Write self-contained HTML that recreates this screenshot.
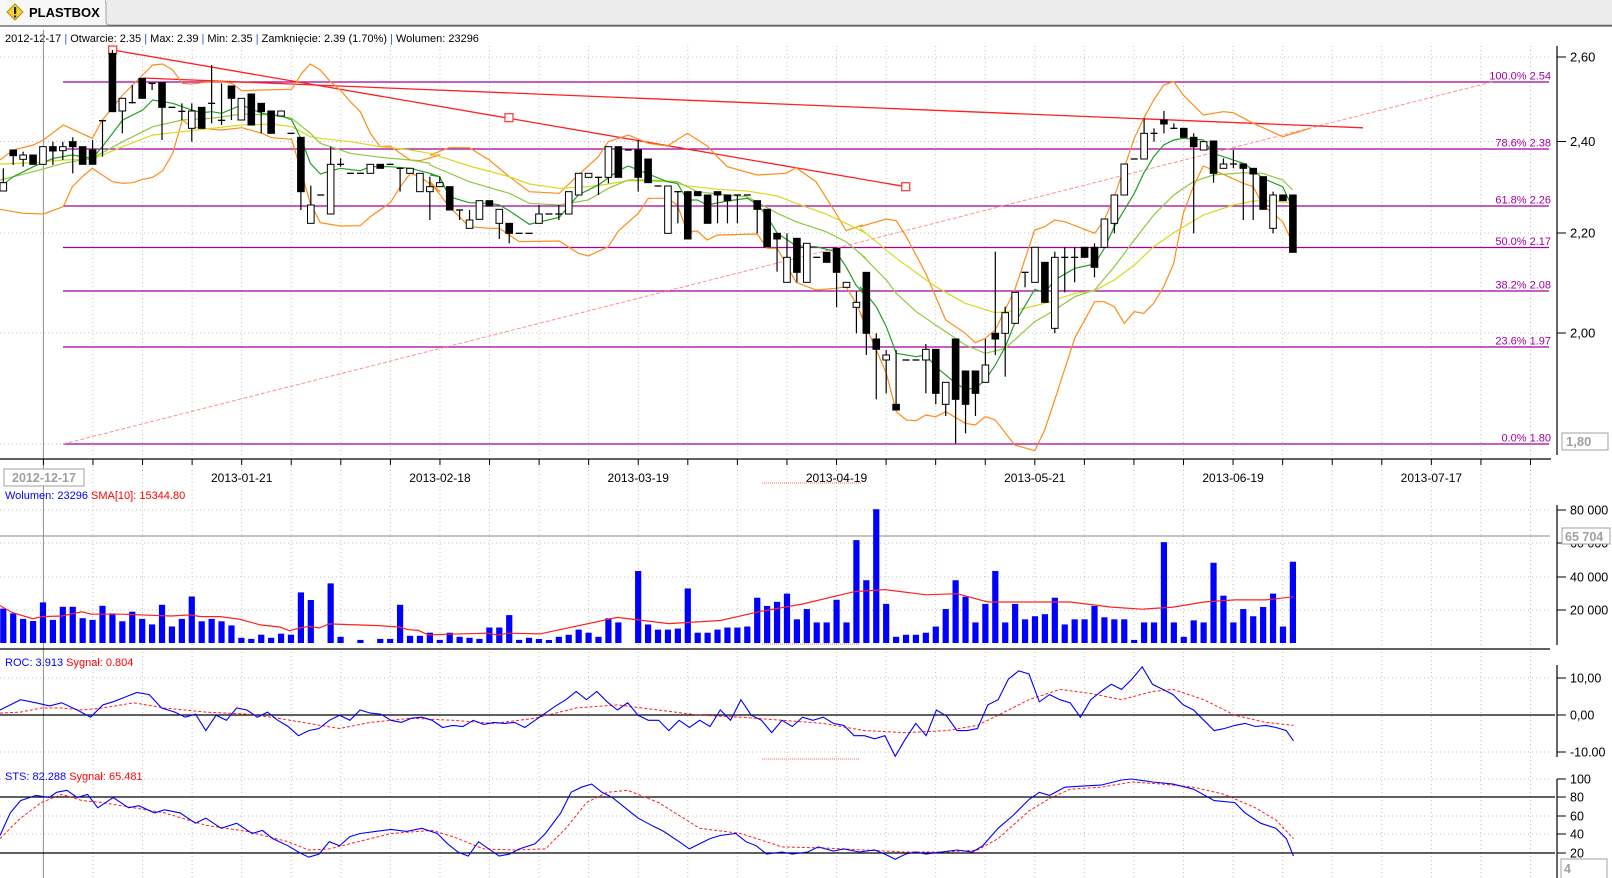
<!DOCTYPE html>
<html><head><meta charset="utf-8"><style>
html,body{margin:0;padding:0;background:#fff;width:1612px;height:878px;overflow:hidden}
svg{display:block;font-family:"Liberation Sans",sans-serif}
</style></head><body>
<svg id="s" width="1612" height="878" xmlns="http://www.w3.org/2000/svg">
<rect x="0" y="0" width="1612" height="26" fill="#ececec"/>
<path d="M0 26 L0 0 L103 0 Q106 0 106 4 L106 22 Q106 25 110 25 L1612 25" fill="#f7f7f7" stroke="#a0a0a0"/>
<rect x="0" y="0" width="105" height="26" fill="#f7f7f7"/>
<line x1="0" y1="26" x2="1612" y2="26" stroke="#303030"/>
<path d="M15 4 L23 12 L15 20 L7 12 Z" fill="#f3d23a" stroke="#b08a10"/>
<rect x="14" y="7" width="2.2" height="7" fill="#222"/><rect x="14" y="15.5" width="2.2" height="2" fill="#222"/>
<text x="29" y="17" font-size="13" font-weight="bold" fill="#000">PLASTBOX</text>
<text x="5" y="42" font-size="11" fill="#000">2012-12-17 <tspan fill="#2060c0">|</tspan> Otwarcie: 2.35 <tspan fill="#2060c0">|</tspan> Max: 2.39 <tspan fill="#2060c0">|</tspan> Min: 2.35 <tspan fill="#2060c0">|</tspan> Zamknięcie: 2.39 (1.70%)  <tspan fill="#2060c0">|</tspan> Wolumen: 23296</text>
<g id="g"></g>
</svg>
<script>
var g=document.getElementById('g'),h='';
function L(x1,y1,x2,y2,c,w,d){h+='<line x1="'+x1+'" y1="'+y1+'" x2="'+x2+'" y2="'+y2+'" stroke="'+c+'" stroke-width="'+(w||1)+'"'+(d?' stroke-dasharray="'+d+'"':'')+'/>';}
function T(x,y,t,c,sz,a,extra){h+='<text x="'+x+'" y="'+y+'" fill="'+c+'" font-size="'+sz+'"'+(a?' text-anchor="'+a+'"':'')+(extra||'')+'>'+t+'</text>';}
function P(pts,c,w,d){h+='<polyline fill="none" stroke="'+c+'" stroke-width="'+(w||1)+'"'+(d?' stroke-dasharray="'+d+'"':'')+' points="'+pts.map(function(p){return p[0].toFixed(1)+','+p[1].toFixed(1)}).join(' ')+'"/>';}
var gx=[];for(var k=0;k<=30;k++)gx.push(43.4+49.57*k);
// grid verticals
function vgrid(y1,y2){gx.forEach(function(x,k){if(k>0&&x<1552)L(x,y1,x,y2,'#c0c0c0',1,'1,3');});}
vgrid(46,458);vgrid(466,536);vgrid(536,645);vgrid(652,770);vgrid(772,878);
// price grid
[57,141.5,233,333,444].forEach(function(y){L(0,y,1550,y,'#c0c0c0',1,'1,3');});
// cursor line
L(43.4,30,43.4,878,'#909090',1);
// fib
var fib=[[82,'100.0% 2.54'],[149,'78.6% 2.38'],[206,'61.8% 2.26'],[247.5,'50.0% 2.17'],[291,'38.2% 2.08'],[347,'23.6% 1.97'],[444,'0.0% 1.80']];
fib.forEach(function(f){L(63,f[0],1549,f[0],'#a000a0',1.2);T(1551,f[0]-2.5,f[1],'#a000a0',11,'end');});
// pink dashed
L(63,444,1492,82,'#ff9090',1,'4,2');
// red lines
L(112.7,50,905.7,186.7,'#ff2020',1.3);L(143,78,1363,127.8,'#ff2020',1.3);
[[112.7,50],[509,117.7],[905.7,186.7]].forEach(function(p){h+='<rect x="'+(p[0]-4)+'" y="'+(p[1]-4)+'" width="8" height="8" fill="#fff" stroke="#ff4040" stroke-width="1.3"/>';});
// indicator lines
function cv(arr,off){return arr.map(function(p){return [off+p[0]/3,40+p[1]/3];});}
function seg(a6,a7,a8){return cv(a6,0).concat(cv(a7,430)).concat(cv(a8,860));}
var up=seg([[0,360],[40,330],[100,315],[130,300],[190,255],[277,295],[307,240],[368,165],[428,105],[458,75],[488,72],[518,90],[547,130],[575,132],[605,128],[635,125],[665,125],[695,130],[725,152],[785,150],[875,148],[905,100],[931,72],[961,90],[991,125],[1021,150],[1051,185],[1081,215],[1111,280],[1141,320],[1171,318],[1201,340],[1231,360],[1261,362],[1319,345]],
[[0,345],[58,323],[118,323],[178,360],[238,410],[298,455],[388,460],[445,405],[505,350],[535,305],[595,285],[655,310],[712,318],[772,280],[832,318],[862,350],[892,380],[982,405],[1068,400],[1098,383],[1158,425],[1218,520],[1248,572],[1298,555]],
[[0,560],[79,537],[109,542],[139,590],[197,700],[257,840],[316,880],[346,908],[376,895],[406,870],[464,750],[524,570],[554,560],[584,540],[614,545],[704,580],[733,540],[763,470],[823,295],[851,235],[881,180],[911,135],[941,125],[970,165],[1030,225],[1090,215],[1120,218],[1180,250],[1268,290],[1350,265]]);
var lo=seg([[0,508],[70,520],[130,522],[190,500],[217,440],[247,410],[277,385],[307,405],[338,425],[368,430],[398,428],[428,418],[458,412],[488,392],[518,340],[547,240],[575,260],[605,265],[665,270],[725,263],[785,280],[815,293],[875,298],[905,400],[931,490],[961,548],[1021,558],[1081,557],[1111,530],[1171,488],[1201,440],[1231,400],[1261,410],[1319,455]],
[[0,425],[58,500],[118,560],[178,565],[208,565],[268,605],[388,603],[445,640],[475,648],[535,620],[565,573],[625,520],[655,475],[712,475],[742,495],[772,575],[802,573],[832,600],[862,585],[982,582],[1012,625],[1042,625],[1098,727],[1158,750],[1218,745],[1248,740],[1278,790],[1308,855]],
[[0,820],[49,930],[79,1000],[109,1115],[139,1140],[169,1142],[197,1125],[227,1130],[257,1115],[316,1150],[346,1155],[376,1130],[406,1140],[464,1215],[524,1232],[554,1170],[584,1080],[644,895],[704,785],[733,785],[763,800],[793,850],[823,815],[851,820],[881,790],[911,740],[941,670],[970,520],[1000,440],[1030,378],[1090,403],[1150,430],[1180,440],[1208,495],[1238,520],[1268,545],[1298,610]]);
var yl=seg([[0,372],[100,368],[190,360],[277,358],[368,320],[458,285],[547,275],[635,265],[725,255],[815,252],[875,260],[931,290],[961,295],[1051,305],[1141,320],[1231,330],[1289,340]],
[[0,340],[118,378],[238,410],[298,432],[388,445],[475,440],[535,432],[595,422],[712,425],[772,437],[862,448],[952,453],[1042,468],[1098,490],[1188,522],[1248,550],[1308,580]],
[[0,565],[109,655],[227,740],[316,790],[406,818],[464,812],[554,790],[644,760],[704,752],[763,720],[823,675],[881,620],[941,578],[1030,525],[1120,495],[1180,483],[1238,482],[1298,490]]);
var lg=seg([[0,420],[100,395],[190,370],[277,355],[368,305],[458,260],[547,240],[635,235],[725,222],[815,225],[875,235],[931,280],[961,310],[1051,340],[1141,352],[1231,360],[1289,370]],
[[0,375],[118,425],[238,460],[298,490],[388,495],[475,480],[535,445],[595,420],[655,420],[742,425],[802,455],[892,465],[952,470],[1042,520],[1098,545],[1188,575],[1248,605],[1308,655]],
[[0,640],[79,720],[109,760],[169,815],[227,855],[316,915],[376,940],[436,925],[524,845],[584,810],[644,770],[704,750],[763,680],[823,600],[881,525],[941,465],[1000,425],[1060,405],[1150,398],[1208,400],[1268,420],[1298,450]]);
var gr=seg([[0,440],[40,410],[100,380],[160,355],[217,345],[277,355],[307,320],[368,240],[428,210],[458,180],[518,190],[575,210],[605,218],[635,215],[665,220],[725,195],[785,220],[845,228],[875,240],[905,300],[931,370],[961,402],[1021,385],[1081,392],[1111,380],[1171,380],[1231,385],[1289,400],[1319,410]],
[[0,405],[29,410],[58,470],[118,488],[178,490],[208,495],[238,512],[298,553],[388,532],[445,465],[505,435],[565,392],[595,378],[655,402],[712,425],[742,430],[772,480],[802,480],[832,495],[892,483],[952,475],[982,492],[1012,530],[1042,580],[1098,617],[1158,620],[1218,635],[1248,680],[1278,735],[1308,770]],
[[0,740],[49,800],[79,860],[109,940],[169,950],[197,945],[227,980],[287,1030],[316,1047],[346,1045],[376,1020],[406,975],[436,920],[464,850],[524,748],[554,758],[584,720],[644,685],[704,672],[733,625],[763,560],[823,460],[851,400],[881,350],[911,315],[941,300],[970,295],[1030,300],[1060,340],[1150,370],[1180,390],[1208,415],[1268,440],[1298,505]]);
P(up,'#ff8c1a',1.2);P(lo,'#ff8c1a',1.2);P(yl,'#d8d820',1.2);P(lg,'#90c840',1.2);P(gr,'#20a020',1.2);
// candles [i,top,bot,hi,lo,type] zoom units
var C=[[0,428,453,385,453,'w'],[1,330,347,330,375,'b'],[2,345,358,335,380,'w'],[3,345,373,345,373,'b'],[4,320,373,320,373,'w'],[5,320,333,305,375,'b'],[6,320,332,305,360,'w'],[7,305,320,292,400,'b'],[8,320,373,320,373,'b'],[9,330,373,300,373,'b'],[10,242,242,240,350,'c'],[11,40,215,30,215,'b'],[12,175,213,175,280,'w'],[13,188,188,135,190,'c'],[14,115,175,115,175,'b'],[15,130,130,130,150,'c'],[16,128,202,128,300,'b'],[17,202,202,202,202,'c'],[18,214,214,190,240,'c'],[19,213,265,190,305,'w'],[20,202,265,202,265,'b'],[21,190,190,75,250,'c'],[22,241,241,130,255,'c'],[23,138,175,138,240,'b'],[24,175,240,175,240,'w'],[25,162,255,162,255,'b'],[26,190,215,190,280,'b'],[27,213,280,213,280,'b'],[28,213,228,213,228,'w'],[29,280,280,280,280,'c'],[30,292,455,292,510,'b'],[31,495,550,437,550,'w'],[32,465,465,465,465,'c'],[33,373,522,320,522,'w'],[34,373,373,355,380,'c'],[35,400,400,400,400,'c'],[36,400,400,400,400,'c'],[37,373,400,373,400,'w'],[38,373,385,373,385,'b'],[39,373,373,373,373,'c'],[40,385,385,385,455,'c'],[41,385,400,385,400,'w'],[42,400,455,400,455,'w'],[43,440,455,410,540,'w'],[44,428,440,410,440,'w'],[45,440,510,440,510,'b'],[46,510,510,510,540,'c'],[47,540,565,510,565,'w'],[48,482,538,482,538,'w'],[49,482,498,482,498,'b'],[50,508,550,508,597,'w'],[51,550,580,550,610,'b'],[52,580,580,580,580,'c'],[53,580,580,580,580,'c'],[54,522,550,495,550,'w'],[55,522,522,522,522,'c'],[56,522,522,495,540,'c'],[57,455,522,455,522,'w'],[58,400,465,400,465,'w'],[59,400,412,400,412,'w'],[60,412,412,412,465,'c'],[61,320,412,320,430,'w'],[62,320,412,320,412,'b'],[63,330,330,330,330,'c'],[64,330,412,300,455,'b'],[65,357,428,357,428,'b'],[66,438,438,438,438,'c'],[67,438,580,438,580,'w'],[68,455,455,455,550,'c'],[69,455,597,455,597,'b'],[70,455,467,455,467,'b'],[71,465,550,465,550,'b'],[72,455,465,455,550,'b'],[73,465,482,465,550,'b'],[74,465,465,465,550,'c'],[75,465,465,465,465,'c'],[76,482,508,482,580,'b'],[77,508,620,508,620,'b'],[78,580,597,580,695,'b'],[79,652,727,580,727,'w'],[80,595,697,595,727,'b'],[81,610,727,610,727,'w'],[82,652,652,652,652,'c'],[83,637,667,637,667,'b'],[84,625,697,625,802,'b'],[85,727,742,727,742,'w'],[86,787,802,755,880,'w'],[87,697,880,697,945,'b'],[88,897,928,880,1078,'b'],[89,945,960,930,1060,'w'],[90,1093,1110,930,1110,'b'],[91,960,960,960,960,'c'],[92,960,960,960,960,'c'],[93,928,960,912,1060,'w'],[94,928,1060,928,1093,'b'],[95,1027,1093,1027,1128,'w'],[96,897,1078,897,1210,'b'],[97,993,1093,993,1180,'b'],[98,993,1060,993,1128,'b'],[99,975,1027,897,1027,'w'],[100,880,897,635,945,'b'],[101,818,880,800,1010,'w'],[102,757,850,757,850,'w'],[103,697,697,697,742,'c'],[104,622,727,622,727,'w'],[105,667,787,667,787,'b'],[106,652,865,635,880,'w'],[107,652,652,622,757,'c'],[108,652,652,622,727,'c'],[109,622,652,622,652,'b'],[110,622,682,610,712,'b'],[111,537,622,537,622,'w'],[112,465,550,465,580,'w'],[113,372,465,372,465,'w'],[114,357,357,357,357,'c'],[115,280,357,235,357,'w'],[116,280,280,265,305,'c'],[117,240,252,213,280,'b'],[118,265,265,250,265,'c'],[119,265,292,265,292,'b'],[120,292,320,280,580,'b'],[121,305,330,305,330,'w'],[122,303,400,303,428,'b'],[123,372,385,355,385,'w'],[124,372,372,330,385,'c'],[125,372,385,372,540,'b'],[126,385,402,385,540,'b'],[127,410,508,410,508,'b'],[128,465,565,455,580,'w'],[129,465,482,465,482,'b'],[130,465,637,465,637,'b']];
C.forEach(function(c){var x=3.3+9.92*c[0],t=40+c[1]/3,b=40+c[2]/3,hi=40+c[3]/3,lw=40+c[4]/3;
 if(hi<t)L(x,hi,x,t,'#000',1.2);if(lw>b)L(x,b,x,lw,'#000',1.2);
 if(c[5]=='c'){L(x-3.5,t,x+3.5,t,'#000',1.3);}
 else{var hh=Math.max(b-t,2);h+='<rect x="'+(x-3.3)+'" y="'+t+'" width="6.6" height="'+hh+'" fill="'+(c[5]=='b'?'#000':'#fff')+'" stroke="#000" stroke-width="1"/>';}});
// price axis
L(1557,46,1557,455,'#000',1.2);
[[57,'2,60'],[141.5,'2,40'],[233,'2,20'],[333,'2,00']].forEach(function(a){L(1557,a[0],1566,a[0],'#000');T(1570,a[0]+4.5,a[1],'#000',13);});
h+='<rect x="1562" y="433" width="46" height="17" fill="#fff" stroke="#a0a0a0"/>';T(1566,446,'1,80','#a0a0a0',13,null,' font-weight="bold"');
// x axis
L(0,459,1551,459,'#000',1.2);
gx.forEach(function(x){if(x<1552)L(x,459,x,465,'#000');});
['2012-12-17','2013-01-21','2013-02-18','2013-03-19','2013-04-19','2013-05-21','2013-06-19','2013-07-17'].forEach(function(d,i){if(i>0)T(gx[i*4],482,d,'#000',12,'middle');});
h+='<rect x="4" y="469" width="80" height="17" fill="#fff" stroke="#a0a0a0"/>';T(44,482,'2012-12-17','#a0a0a0',12.5,'middle',' font-weight="bold"');
L(762,483,861,483,'#ff6060',1,'1,1');
// volume panel
h+='<text x="5" y="499" font-size="11"><tspan fill="#0000ff">Wolumen: 23296 </tspan><tspan fill="#ff0000">SMA[10]: 15344.80</tspan></text>';
[510,543,577,610].forEach(function(y){L(0,y,1550,y,'#c0c0c0',1,'1,3');});
L(0,536,1550,536,'#a0a0a0',1.2);
var V=[34.4,29.6,24.1,22,40.6,23.1,36.2,36.2,24.8,23.1,37.2,29.6,21.7,31.3,24.1,18.6,38.2,16.5,24.1,46.5,21.7,24.1,21.7,17.6,5.2,4.1,8.3,5.2,9.3,8.3,50.6,43,0,59.6,6.2,0,3.1,0,4.1,4.1,38.2,7.2,7.2,10.3,3.1,10.3,6.2,5.2,4.1,15.5,15.5,27.9,3.1,5.2,4,3];
var vt=[612,610,605,608,612,594,598,0,548,600,605,605,604,565,608,608,605,603,603,602,574,582,578,570,595,585,598,598,576,598,518,557,488,580,612,610,610,608,602,585,557,573,598,580,548,598,580,595,592,590,574,600,595,595,582,593,595,595,615,598,598,520,598,612,596,598,540,572,598,585,592,583,570,602,539];
vt.forEach(function(t){V.push(t?(618-t)*1.029:0);});
V.forEach(function(v,i){if(v>0){var x=3.3+9.92*i;h+='<rect x="'+(x-3.1)+'" y="'+(643-v)+'" width="6.2" height="'+v+'" fill="#0000ff"/>';}});
var sma=[[0,510],[35,530],[95,548],[123,542],[180,540],[237,528],[265,535],[352,535],[439,538],[497,540],[553,537],[582,542],[640,542],[698,550],[756,566],[812,572],[841,583],[870,575],[898,570],[927,575],[956,563],[1014,565],[1101,568],[1157,572],[1186,580],[1215,582],[1244,595],[1302,593],[1417,590],[1446,596],[1475,590],[1568,592]].map(function(p){return [p[0]/2.904,430+p[1]/2.904];});
[[600,600],[650,606],[700,603],[740,594],[780,587],[830,575],[860,573],[900,578],[930,577],[960,585],[1000,585],[1040,585],[1080,590],[1110,592],[1140,590],[1170,585],[1200,583],[1230,583],[1257,580]].forEach(function(p){sma.push([p[0]*1.029,p[1]*1.029]);});
P(sma,'#ff2020',1.2);
L(0,649,1550,649,'#000',1.2);
L(1557,505,1557,645,'#000',1.2);
[[510,'80 000'],[543,'60 000'],[577,'40 000'],[610,'20 000']].forEach(function(a){L(1557,a[0],1566,a[0],'#000');T(1570,a[0]+4.5,a[1],'#000',12.5);});
h+='<rect x="1562" y="528" width="48" height="16" fill="#fff" stroke="#a0a0a0"/>';T(1565,541,'65 704','#a0a0a0',12.5,null,' font-weight="bold"');
L(762,644,860,644,'#ff6060',1,'1,1');
// ROC
h+='<text x="5" y="666" font-size="11"><tspan fill="#0000ff">ROC: 3.913 </tspan><tspan fill="#ff0000">Sygnał: 0.804</tspan></text>';
[678,752].forEach(function(y){L(0,y,1550,y,'#c0c0c0',1,'1,3');});
L(0,715,1555,715,'#000',1.2);
L(1557,665,1557,757,'#000',1.2);
[[678,'10,00'],[715,'0,00'],[752,'-10.00']].forEach(function(a){L(1557,a[0],1566,a[0],'#000');T(1570,a[0]+4.5,a[1],'#000',12.5);});
function sc(a){return a.map(function(p){return [p[0]*1.029,p[1]*1.029];});}
var roc=[[0,690],[10,685],[20,680],[35,683],[48,686],[60,683],[75,690],[88,697],[100,685],[110,682],[120,678],[133,673],[145,675],[157,688],[170,692],[180,697],[190,694],[200,710],[210,695],[220,700],[230,688],[240,690],[250,697],[260,692],[270,700],[280,706],[290,715],[300,710],[310,708],[320,700],[330,695],[340,700],[350,690],[360,693],[370,694],[380,700],[390,702],[400,698],[410,697],[420,700],[430,707],[440,705],[450,706],[460,700],[470,704],[480,702],[490,703],[500,702],[510,707],[520,700],[530,693],[540,686],[550,680],[560,672],[570,680],[580,672],[590,682],[600,690],[610,683],[620,695],[630,700],[640,700],[650,710],[660,700],[670,707],[680,700],[690,706],[700,690],[710,700],[720,680],[730,695],[740,700],[750,712],[760,700],[770,706],[780,697],[790,700],[800,697],[810,703],[820,705],[830,715],[840,715],[850,718],[860,715],[870,735],[880,718],[890,703],[900,715],[910,690],[920,696],[930,710],[940,710],[950,708],[960,685],[970,680],[980,660],[990,652],[1000,655],[1010,682],[1020,675],[1030,680],[1040,683],[1050,697],[1060,680],[1070,672],[1080,665],[1090,670],[1100,660],[1110,648],[1120,665],[1130,670],[1140,675],[1150,685],[1160,690],[1170,700],[1180,710],[1190,708],[1200,705],[1210,703],[1220,706],[1230,705],[1240,707],[1250,710],[1257,720]];
var rocs=[[0,693],[20,692],[40,688],[60,688],[80,690],[100,688],[130,683],[160,688],[200,692],[240,694],[270,698],[300,703],[330,708],[360,702],[400,698],[440,700],[480,703],[520,698],[560,688],[600,685],[640,690],[680,695],[720,697],[760,700],[800,703],[840,710],[880,712],[920,710],[950,705],[970,695],[1000,680],[1030,670],[1060,674],[1090,680],[1120,672],[1140,670],[1170,680],[1200,695],[1230,702],[1257,705]];
P(sc(rocs),'#ff2020',1,'3,2');P(sc(roc),'#0000ff',1.1);
L(762,759,860,759,'#ff6060',1,'1,1');
// STS
h+='<text x="5" y="780" font-size="11"><tspan fill="#0000ff">STS: 82.288 </tspan><tspan fill="#ff0000">Sygnał: 65.481</tspan></text>';
[779,816,834].forEach(function(y){L(0,y,1550,y,'#c0c0c0',1,'1,3');});
L(0,797,1555,797,'#000',1.2);L(0,853,1555,853,'#000',1.2);
L(1557,779,1557,878,'#000',1.2);
[[779,'100'],[797,'80'],[816,'60'],[834,'40'],[853,'20']].forEach(function(a){L(1557,a[0],1566,a[0],'#000');T(1570,a[0]+4.5,a[1],'#000',12.5);});
h+='<rect x="1561" y="859" width="46" height="20" fill="#fff" stroke="#a0a0a0"/>';T(1564,873,'4','#a0a0a0',12.5,null,' font-weight="bold"');
var sts=[[0,812],[10,790],[20,778],[35,773],[48,775],[55,770],[65,768],[75,775],[85,772],[95,785],[110,775],[125,785],[135,783],[150,790],[160,787],[175,790],[190,800],[200,795],[215,805],[230,800],[245,810],[255,807],[265,815],[280,822],[290,828],[300,833],[310,830],[320,818],[330,822],[340,813],[350,810],[365,808],[380,806],[395,808],[410,805],[425,810],[435,820],[445,828],[455,832],[465,818],[475,825],[485,832],[495,830],[505,825],[520,820],[530,810],[545,790],[555,770],[565,765],[575,762],[585,770],[595,775],[605,783],[620,795],[635,803],[645,808],[660,818],[670,825],[680,820],[690,815],[700,812],[715,810],[725,818],[735,822],[745,830],[760,828],[770,830],[785,828],[795,823],[810,827],[820,825],[835,828],[850,826],[860,830],[870,835],[880,830],[890,828],[900,830],[915,828],[930,826],[945,828],[955,822],[970,805],[985,792],[1000,777],[1010,770],[1020,773],[1035,765],[1050,764],[1070,763],[1090,758],[1100,757],[1120,760],[1140,762],[1160,767],[1180,778],[1200,780],[1210,790],[1225,800],[1240,805],[1250,815],[1257,832]];
var stss=[[0,815],[20,795],[40,780],[60,772],[80,778],[100,780],[130,785],[160,790],[200,802],[240,808],[280,818],[300,826],[320,825],[340,820],[380,810],[420,807],[440,813],[470,825],[500,826],[530,825],[550,805],[570,780],[590,770],[610,768],[640,780],[680,805],[720,810],[760,823],[800,824],[840,826],[880,828],[920,828],[950,826],[970,815],[1000,788],[1020,776],[1040,767],[1070,765],[1100,760],[1130,762],[1160,765],[1190,772],[1220,785],[1240,797],[1257,815]];
P(sc(stss),'#ff2020',1,'3,2');P(sc(sts),'#0000ff',1.1);
g.innerHTML=h;
</script>
</body></html>
